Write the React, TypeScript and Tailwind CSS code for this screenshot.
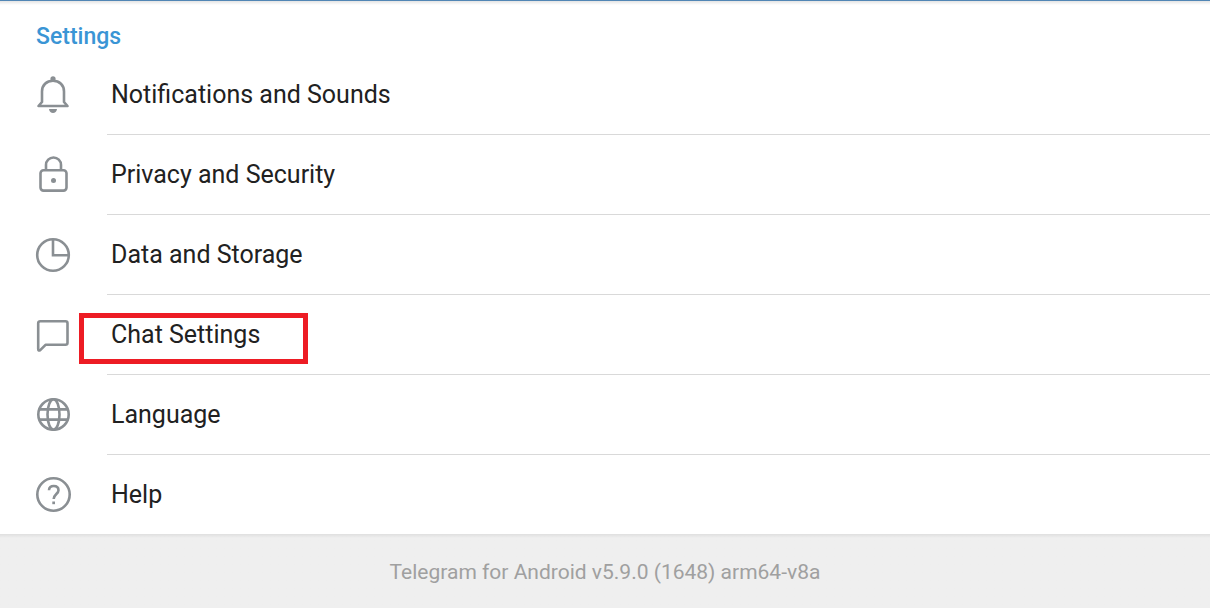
import React from "react";

type Item = { label: string; icon: React.ReactNode; highlighted?: boolean };

const items: Item[] = [
  {
    label: "Notifications and Sounds",
    icon: (
      <>
        <path d="M7 26V15.500C7 9 11.500 4.800 18 4.800S29 9 29 15.500V26L32.500 30H3.500z" strokeLinejoin="round" />
        <circle cx="18" cy="2.800" r="2.600" fill="currentColor" stroke="none" />
        <path d="M14 33h8c-.3 2.500-2 4-4 4s-3.700-1.500-4-4z" fill="currentColor" stroke="none" />
      </>
    ),
  },
  {
    label: "Privacy and Security",
    icon: (
      <>
        <rect x="5.500" y="14.300" width="26" height="20.300" rx="3" />
        <path d="M11 14V9a7.500 7.500 0 0 1 15 0v5" />
        <circle cx="18.500" cy="24.400" r="2.500" fill="currentColor" stroke="none" />
      </>
    ),
  },
  {
    label: "Data and Storage",
    icon: (
      <>
        <circle cx="18" cy="19" r="15.800" />
        <path d="M18 3.500v15.800h15.500" />
      </>
    ),
  },
  {
    label: "Chat Settings",
    highlighted: true,
    icon: (
      <path d="M5.200 5.200h25.300a2 2 0 0 1 2 2v19.600a2 2 0 0 1-2 2H10.500L5 34.300Q3.200 35 3.200 33V7.200a2 2 0 0 1 2-2z" strokeLinejoin="round" />
    ),
  },
  {
    label: "Language",
    icon: (
      <>
        <circle cx="18.500" cy="18.500" r="15.200" />
        <ellipse cx="18.500" cy="18.500" rx="6" ry="15.200" />
        <path d="M4 13.400h29M4 23.600h29" />
      </>
    ),
  },
  {
    label: "Help",
    icon: (
      <>
        <circle cx="18.500" cy="18.500" r="16.200" />
        <path d="M14 14.300c0-2.800 2-4.300 4.700-4.300s4.800 1.500 4.800 4.200c0 3.600-4.800 4.100-4.800 8.800" />
        <path d="M17.300 25.500h2.700v2.700h-2.700z" fill="currentColor" stroke="none" />
      </>
    ),
  },
];

export default function App() {
  return (
    <div className="flex min-h-screen flex-col bg-[#efefef] font-['Roboto',sans-serif]">
      <main className="bg-white">
        <div className="h-px bg-[#5186b5]" />
        <h1 className="bg-linear-to-b from-[#e4e4e4] to-white to-[4px] px-9 pt-5 pb-0.5 text-[23px] leading-8 font-medium text-[#3a95d5]">Settings</h1>
        <ul>
          {items.map((item, i) => (
            <li key={item.label}>
              <button type="button" className="flex w-full items-stretch pl-[35px] text-left">
                <span className="w-[72px] pt-[21px] text-[#8a8f93]">
                  <svg width="36" height="38" viewBox="0 0 36 38" fill="none" stroke="currentColor" strokeWidth="2.600" aria-hidden="true">
                    {item.icon}
                  </svg>
                </span>
                <span className={`flex-1 pl-1 text-[25px] leading-[79px] text-[#212121] ${i < items.length - 1 ? "border-b border-[#d9d9d9]" : ""}`}>
                  <span className="relative">
                    {item.label}
                    {item.highlighted && <span className="absolute -top-[7px] -right-12 -bottom-[15px] -left-8 border-[5px] border-[#ed1c24]" />}
                  </span>
                </span>
              </button>
            </li>
          ))}
        </ul>
      </main>
      <footer className="flex flex-1 items-center justify-center bg-linear-to-b from-[#dfdfdf] to-[#efefef] to-[4px] pt-1 text-[21px] text-[#a0a0a0]">Telegram for Android v5.9.0 (1648) arm64-v8a</footer>
    </div>
  );
}
